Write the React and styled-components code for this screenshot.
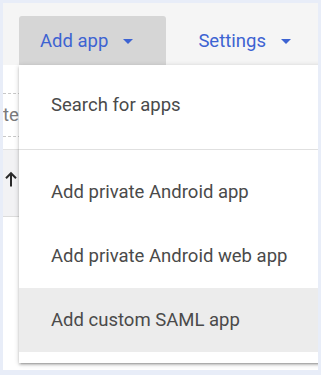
import React from "react";
import styled, { createGlobalStyle } from "styled-components";

const GlobalStyle = createGlobalStyle`
  html, body { margin: 0; padding: 0; }
  body {
    background: #e8edf8;
    font-family: Roboto, "Liberation Sans", Arial, sans-serif;
  }
`;

const Frame = styled.div`
  padding: 3px 3px 5px 3px;
  width: 315px;
`;

const Panel = styled.div`
  position: relative;
  width: 315px;
  height: 367px;
  background: #ffffff;
  overflow: hidden;
`;

const Header = styled.div`
  height: 62px;
  box-sizing: border-box;
  background: #f5f5f5;
  padding: 13px 0 0 16px;
  display: flex;
  gap: 11px;
  align-items: flex-start;
`;

const ToolButton = styled.div`
  height: 49px;
  box-sizing: border-box;
  display: flex;
  align-items: center;
  padding: 0 ${(p) => (p.$pr ? p.$pr : 21)}px 0 21px;
  background: ${(p) => (p.$active ? "#d6d6d6" : "transparent")};
  border-radius: 3px 3px 0 0;
  color: #3d63d2;
  font-size: 18.5px;
  gap: 15px;
  white-space: nowrap;
`;

const Caret = styled.span`
  width: 0;
  height: 0;
  border-left: 5px solid transparent;
  border-right: 5px solid transparent;
  border-top: 5px solid #3d63d2;
  margin-top: 2px;
`;

const SearchRow = styled.div`
  margin-top: 28px;
  height: 44px;
  box-sizing: border-box;
  border-top: 1px dashed #c8c8c8;
  border-bottom: 1px dashed #c8c8c8;
  display: flex;
  align-items: center;
  font-size: 18.5px;
  color: #7a7a7a;
`;

const HeadRow = styled.div`
  margin-top: 12px;
  height: 68px;
  box-sizing: border-box;
  border-top: 1px solid #e2e2e2;
  border-bottom: 1px solid #dcdcdc;
  background: #f2f2f4;
  display: flex;
  align-items: center;
  padding: 0 0 8px 2px;
`;

const Menu = styled.div`
  position: absolute;
  top: 62px;
  left: 16px;
  width: 320px;
  background: #ffffff;
  padding: 8px 0 11px;
  box-shadow: 0 2px 2px 0 rgba(0, 0, 0, 0.14), 0 3px 1px -2px rgba(0, 0, 0, 0.12),
    0 1px 5px 0 rgba(0, 0, 0, 0.2);
`;

const MenuItem = styled.div`
  height: 64px;
  display: flex;
  align-items: center;
  padding-left: 32px;
  font-size: 18.5px;
  color: #4a4a4a;
  background: ${(p) => (p.$hover ? "#ececec" : "transparent")};
  white-space: nowrap;
`;

const Divider = styled.div`
  height: 1px;
  margin: 12px 0 10px;
  background: #e0e0e0;
`;

const ArrowUp = () => (
  <svg width="12" height="16" viewBox="0 0 12 16">
    <path d="M6 15.5V2.5M1 7.2L6 2.2L11 7.2" fill="none" stroke="#2a2a2a" strokeWidth="2" />
  </svg>
);

export default function App() {
  return (
    <>
      <GlobalStyle />
      <Frame>
        <Panel>
          <Header>
            <ToolButton $active $pr={33}>
              Add app
              <Caret />
            </ToolButton>
            <ToolButton>
              Settings
              <Caret />
            </ToolButton>
          </Header>
          <SearchRow>te</SearchRow>
          <HeadRow>
            <ArrowUp />
          </HeadRow>
          <Menu>
            <MenuItem>Search for apps</MenuItem>
            <Divider />
            <MenuItem>Add private Android app</MenuItem>
            <MenuItem>Add private Android web app</MenuItem>
            <MenuItem $hover>Add custom SAML app</MenuItem>
          </Menu>
        </Panel>
      </Frame>
    </>
  );
}
